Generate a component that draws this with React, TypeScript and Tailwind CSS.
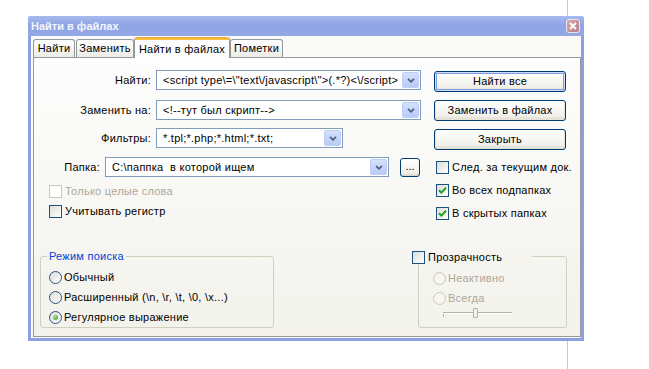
import React from "react";

function Chevron() {
  return (
    <svg width="8" height="5" viewBox="0 0 8 5">
      <path d="M1 0.8 L4 3.8 L7 0.8" fill="none" stroke="#4d6185" strokeWidth="1.8" />
    </svg>
  );
}

function Combo({ text, className }: { text: string; className: string }) {
  return (
    <div className={"flex h-[20px] border border-[#7f9db9] bg-white " + className}>
      <div className="flex-1 overflow-hidden whitespace-pre pl-[6px] leading-[18px]">{text}</div>
      <div className="my-px mr-px flex w-[17px] items-center justify-center rounded-[2px] border border-[#bccdf6] bg-[linear-gradient(to_bottom,#d4e0fc,#b9cbf6)]">
        <Chevron />
      </div>
    </div>
  );
}

function XPButton({ label, isDefault }: { label: string; isDefault?: boolean }) {
  return (
    <div
      className={
        "flex h-[21px] w-[132px] items-center justify-center rounded-[3px] border border-[#003c74] bg-[linear-gradient(to_bottom,#ffffff,#f1f0ea_80%,#d8d2c6)] leading-[13px] " +
        (isDefault ? "shadow-[inset_0_0_0_1px_#cfdcf8,inset_0_0_0_2px_#7f9de6]" : "shadow-[inset_0_-1px_0_1px_#e6e2d8]")
      }
    >
      {label}
    </div>
  );
}

function CheckBox({ label, checked, disabled }: { label: string; checked?: boolean; disabled?: boolean }) {
  return (
    <div className="flex h-[13px] items-center">
      <div
        className={
          "flex h-[13px] w-[13px] shrink-0 items-center justify-center border " +
          (disabled
            ? "border-[#cac8bb] bg-white"
            : "border-[#1c5180] bg-[linear-gradient(135deg,#dcdcd7,#ffffff)]")
        }
      >
        {checked && (
          <svg width="9" height="9" viewBox="0 0 9 9">
            <path d="M1 4.2 L3.4 6.6 L8 1.8" fill="none" stroke="#21a121" strokeWidth="2" />
          </svg>
        )}
      </div>
      <span className={"ml-[3px] whitespace-nowrap leading-[13px] " + (disabled ? "text-[#aca899]" : "text-black")}>
        {label}
      </span>
    </div>
  );
}

function Radio({ label, checked, disabled }: { label: string; checked?: boolean; disabled?: boolean }) {
  return (
    <div className="flex h-[13px] items-center">
      <div
        className={
          "flex h-[13px] w-[13px] shrink-0 items-center justify-center rounded-full border " +
          (disabled
            ? "border-[#cac8bb] bg-[#f6f5f0]"
            : "border-[#2d4f7e] bg-[linear-gradient(135deg,#dcdcd7,#ffffff)]")
        }
      >
        {checked && (
          <div className="h-[5px] w-[5px] rounded-full bg-[radial-gradient(circle_at_35%_35%,#a6e29a,#21a121)]" />
        )}
      </div>
      <span className={"ml-[2px] whitespace-nowrap leading-[13px] " + (disabled ? "text-[#aca899]" : "text-black")}>
        {label}
      </span>
    </div>
  );
}

export default function App() {
  return (
    <div className="relative h-[369px] w-[649px] overflow-hidden bg-white pl-[28px] pt-[16px] font-['Liberation_Sans',Arial,sans-serif] text-[11px] tracking-[0.25px] text-black">
      <div className="absolute left-[567px] top-0 h-full w-px bg-[#8ae2e2]" />
      <div className="relative z-10 flex h-[325px] w-[556px] flex-col">
        {/* title bar */}
        <div className="flex h-[20px] items-center justify-between rounded-t-[2px] bg-[linear-gradient(to_bottom,#a9baee,#8fa4e4_45%,#94a8e6)] pl-[3px] pr-[4px]">
          <span className="font-bold leading-[13px] tracking-[0px] text-[#f3f6fd]">Найти в файлах</span>
          <div className="flex h-[14px] w-[14px] items-center justify-center rounded-[3px] border border-[#eae4ef] bg-[linear-gradient(135deg,#dcaab1,#b87c87)]">
            <svg width="8" height="8" viewBox="0 0 8 8">
              <path d="M1 1 L7 7 M7 1 L1 7" stroke="#ffffff" strokeWidth="1.8" />
            </svg>
          </div>
        </div>

        {/* body */}
        <div className="flex flex-1 flex-col border-x-[3px] border-b-[3px] border-[#8c9fe3] bg-[#fafaf8] pb-px pl-[2px]">
          {/* tabs */}
          <div className="flex h-[21px] items-end pt-px">
            <div className="flex h-[18px] w-[42px] items-center justify-center rounded-t-[3px] border border-b-0 border-[#919b9c] bg-[linear-gradient(to_bottom,#ffffff,#ecebe6)] leading-[13px]">
              Найти
            </div>
            <div className="ml-px flex h-[18px] w-[58px] items-center justify-center rounded-t-[3px] border border-b-0 border-[#919b9c] bg-[linear-gradient(to_bottom,#ffffff,#ecebe6)] leading-[13px]">
              Заменить
            </div>
            <div className="relative z-10 -mb-px flex h-[21px] w-[96px] flex-col rounded-t-[3px] border-x border-[#919b9c] bg-[#fdfdfd]">
              <div className="h-[3px] rounded-t-[3px] bg-[linear-gradient(to_bottom,#e8a33a,#ffc83c)]" />
              <div className="flex flex-1 items-center justify-center leading-[13px]">Найти в файлах</div>
            </div>
            <div className="flex h-[18px] w-[53px] items-center justify-center rounded-t-[3px] border border-b-0 border-[#919b9c] bg-[linear-gradient(to_bottom,#ffffff,#ecebe6)] leading-[13px]">
              Пометки
            </div>
          </div>

          {/* panel */}
          <div className="flex flex-1 flex-col border border-[#919b9c] bg-[linear-gradient(to_bottom,#fdfdfd,#f3f2ec)]">
            <div className="flex">
              {/* left column */}
              <div className="flex w-[400px] flex-col">
                <div className="mt-[12px] flex h-[20px] items-center">
                  <span className="w-[117px] text-right leading-[13px]">Найти:</span>
                  <Combo className="ml-[5px] w-[265px]" text={'<script type\\=\\"text\\/javascript\\">(.*?)<\\/script>'} />
                </div>
                <div className="mt-[10px] flex h-[20px] items-center">
                  <span className="w-[117px] text-right leading-[13px]">Заменить на:</span>
                  <Combo className="ml-[5px] w-[265px]" text="<!--тут был скрипт-->" />
                </div>
                <div className="mt-[8px] flex h-[20px] items-center">
                  <span className="w-[117px] text-right leading-[13px]">Фильтры:</span>
                  <Combo className="ml-[5px] w-[187px]" text="*.tpl;*.php;*.html;*.txt;" />
                </div>
                <div className="mt-[9px] flex h-[20px] items-center">
                  <span className="w-[66px] text-right leading-[13px]">Папка:</span>
                  <Combo className="ml-[5px] w-[284px]" text={"C:\\паппка  в которой ищем"} />
                  <div className="ml-[11px] flex h-[19px] w-[20px] items-center justify-center rounded-[3px] border border-[#003c74] bg-[linear-gradient(to_bottom,#ffffff,#f1f0ea_80%,#d8d2c6)] pb-[2px] leading-[13px] tracking-[0px]">
                    ...
                  </div>
                </div>
                <div className="mt-[8px] pl-[15px]">
                  <CheckBox label="Только целые слова" disabled />
                </div>
                <div className="mt-[7px] pl-[15px]">
                  <CheckBox label="Учитывать регистр" />
                </div>
              </div>

              {/* right column */}
              <div className="flex w-[132px] flex-col pt-[13px]">
                <XPButton label="Найти все" isDefault />
                <div className="mt-[8px]">
                  <XPButton label="Заменить в файлах" />
                </div>
                <div className="mt-[8px]">
                  <XPButton label="Закрыть" />
                </div>
                <div className="mt-[11px] flex flex-col gap-[10px] pl-[2px]">
                  <CheckBox label="След. за текущим док." />
                  <CheckBox label="Во всех подпапках" checked />
                  <CheckBox label="В скрытых папках" checked />
                </div>
              </div>
            </div>

            {/* bottom groups */}
            <div className="mt-[36px] flex pl-[6px]">
              <div className="relative h-[72px] w-[234px] rounded-[3px] border border-[#d0d0bf]">
                <span className="absolute -top-[7px] left-[6px] bg-[#f5f4ef] px-[2px] leading-[13px] text-[#0046d5]">
                  Режим поиска
                </span>
                <div className="flex flex-col gap-[7px] pl-[8px] pt-[14px]">
                  <Radio label="Обычный" />
                  <Radio label={"Расширенный (\\n, \\r, \\t, \\0, \\x...)"} />
                  <Radio label="Регулярное выражение" checked />
                </div>
              </div>

              <div className="relative ml-[144px] h-[72px] w-[149px] rounded-[3px] border border-[#d0d0bf]">
                <div className="absolute -left-[7px] -top-[6px] w-[120px] bg-[#f5f4ef]">
                  <CheckBox label="Прозрачность" />
                </div>
                <div className="flex flex-col pl-[14px] pt-[15px]">
                  <Radio label="Неактивно" disabled />
                  <div className="mt-[7px]">
                    <Radio label="Всегда" disabled />
                  </div>
                  <div className="relative ml-[10px] mt-[3px] h-[12px] w-[69px]">
                    <div className="absolute left-0 right-0 top-[4px] h-[2px] border-t border-[#b4b2a6] border-b border-b-white" />
                    <div className="absolute left-0 top-[6px] h-[3px] w-px bg-[#b4b2a6]" />
                    <div className="absolute left-[30px] top-0 h-[10px] w-[5px] rounded-[1px] border border-[#b4b2a6] bg-[#f4f3ee]" />
                  </div>
                </div>
              </div>
            </div>
          </div>
        </div>
      </div>
    </div>
  );
}
